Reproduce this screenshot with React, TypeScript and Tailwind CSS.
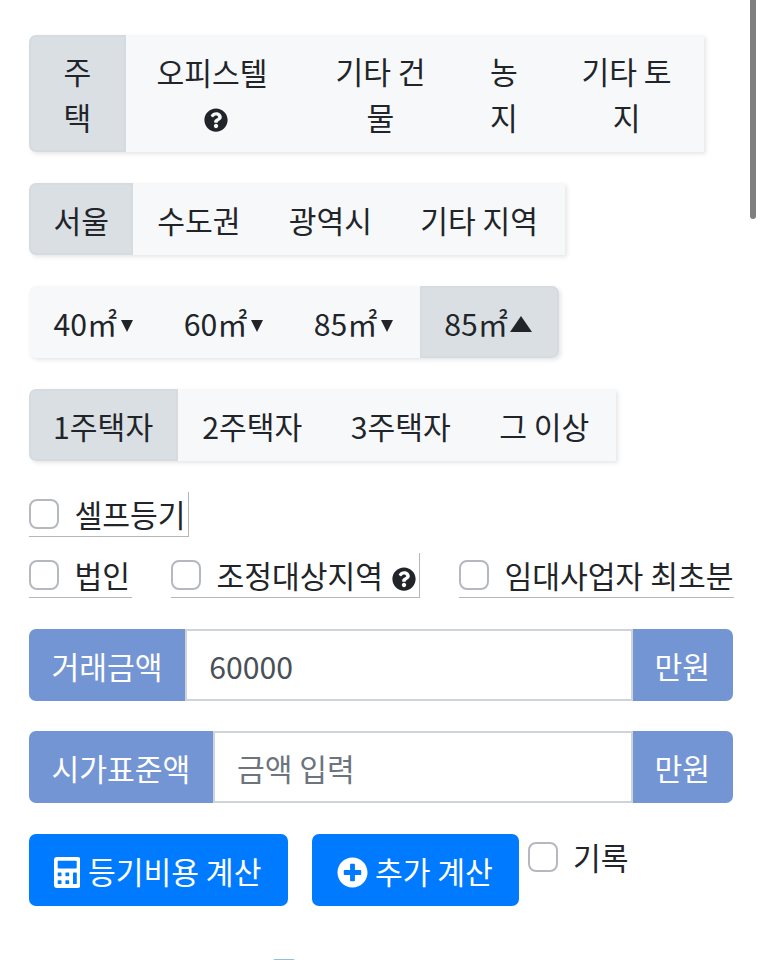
import type { ReactNode } from "react";
import { FaPlusCircle, FaQuestionCircle } from "react-icons/fa";

function Segment({ active, className = "", children }: { active?: boolean; className?: string; children: ReactNode }) {
  return (
    <button
      className={`flex shrink-0 items-center justify-center border-2 px-[22.1px] pt-[12.6px] pb-[10px] whitespace-nowrap ${
        active ? "border-[#d6dbe0] bg-[#dadfe3]" : "border-transparent"
      } ${className}`}
    >
      {children}
    </button>
  );
}

function Group({ className = "", children }: { className?: string; children: ReactNode }) {
  return (
    <div className={`flex w-fit rounded-l-[7px] bg-[#f7f8fa] shadow-[2px_2px_4px_rgba(0,0,0,0.1)] ${className}`}>
      {children}
    </div>
  );
}

function Down() {
  return (
    <svg viewBox="0 0 12 12" className="mt-[6px] ml-[4px] h-[12px] w-[12px]" fill="#212529">
      <path d="M0 0H12L6 12Z" />
    </svg>
  );
}

function Up() {
  return (
    <svg viewBox="0 0 22 17" className="mt-px ml-[2px] h-[16px] w-[22px]" fill="#212529" preserveAspectRatio="none">
      <path d="M11 0L22 17H0Z" />
    </svg>
  );
}

function Calculator() {
  return (
    <svg viewBox="0 0 26.5 31" className="mr-[8px] h-[31px] w-[26.5px]">
      <rect width="26.5" height="31" rx="3" fill="#fff" />
      <g fill="#007bff">
        <rect x="3.7" y="3.8" width="19" height="7.7" rx="0.8" />
        <rect x="3.7" y="15.4" width="3.8" height="3.8" rx="0.6" />
        <rect x="11.4" y="15.4" width="3.8" height="3.8" rx="0.6" />
        <rect x="3.7" y="23.2" width="3.8" height="3.8" rx="0.6" />
        <rect x="11.4" y="23.2" width="3.8" height="3.8" rx="0.6" />
        <rect x="19" y="15.4" width="3.8" height="11.6" rx="0.6" />
      </g>
    </svg>
  );
}

function Box({ className = "" }: { className?: string }) {
  return <span className={`block size-[30px] shrink-0 rounded-[8px] border-2 border-[#b5b9be] bg-white ${className}`} />;
}

function Check({ className = "", children }: { className?: string; children: ReactNode }) {
  return (
    <label className={`flex h-[45px] items-center border-b border-[#b4b7ba] whitespace-nowrap ${className}`}>
      <Box />
      <span className="ml-[15.5px] flex items-center pt-[2px]">{children}</span>
    </label>
  );
}

function MoneyField({ label, value, placeholder, className = "" }: { label: string; value?: string; placeholder?: string; className?: string }) {
  return (
    <div className={`flex h-[72px] overflow-hidden rounded-[7px] ${className}`}>
      <span className="flex shrink-0 items-center bg-[#7495d4] pt-[3px] pr-[22.3px] pl-[22.5px] text-white">{label}</span>
      <input
        className="min-w-0 flex-1 border-2 border-[#ced4da] bg-white px-[22.3px] pt-[3px] text-[#495057] outline-none placeholder:text-[#6c757d]"
        defaultValue={value}
        placeholder={placeholder}
      />
      <span className="flex w-[100px] shrink-0 items-center bg-[#7495d4] pt-[3px] pl-[21.5px] text-white">만원</span>
    </div>
  );
}

export default function App() {
  return (
    <div className="relative h-[960px] w-[762px] overflow-hidden bg-white pt-[35px] pl-[29px] font-['Noto_Sans_CJK_KR',sans-serif] text-[30.2px] leading-[45.5px] text-[#212529]">
      <Group className="h-[117px]">
        <Segment active className="w-[97px] rounded-l-[7px]">주<br />택</Segment>
        <Segment className="w-[179px] flex-col">
          <span className="pr-[7px]">오피스텔</span>
          <span className="flex h-[45.5px] items-center pt-[5px]"><FaQuestionCircle className="size-[24px]" /></span>
        </Segment>
        <Segment className="w-[151px]">기타 건<br />물</Segment>
        <Segment className="w-[96px]">농<br />지</Segment>
        <Segment className="w-[152px] pr-[25px]">기타 토<br />지</Segment>
      </Group>

      <Group className="mt-[31px] h-[72px]">
        <Segment active className="rounded-l-[7px] pr-[22px] pl-[22.5px]">서울</Segment>
        <Segment>수도권</Segment>
        <Segment>광역시</Segment>
        <Segment className="pr-[24.5px]">기타 지역</Segment>
      </Group>

      <Group className="mt-[31px] h-[72px] rounded-r-[7px]">
        <Segment className="w-[130.5px] pr-[24px]">40㎡<Down /></Segment>
        <Segment className="w-[130px] pr-[24px]">60㎡<Down /></Segment>
        <Segment className="w-[130px] pr-[24px]">85㎡<Down /></Segment>
        <Segment active className="w-[139px] rounded-r-[7px] pr-[24px]">85㎡<Up /></Segment>
      </Group>

      <Group className="mt-[31px] h-[72px]">
        <Segment active className="rounded-l-[7px] pr-[23.3px]">1주택자</Segment>
        <Segment className="pl-[21.7px]">2주택자</Segment>
        <Segment className="pl-[22.4px]">3주택자</Segment>
        <Segment className="pr-[24.6px] pl-[22.4px]">그 이상</Segment>
      </Group>

      <div className="mt-[31px] flex">
        <Check className="w-[160px] border-r">셀프등기</Check>
      </div>
      <div className="mt-[16px] flex">
        <Check className="w-[103px]">법인</Check>
        <Check className="ml-[39px] w-[249px] border-r">
          조정대상지역
          <FaQuestionCircle className="mt-[6px] ml-[9px] size-[24px]" />
        </Check>
        <Check className="ml-[39px] w-[275px]">임대사업자 최초분</Check>
      </div>

      <MoneyField className="mt-[31px] w-[704px]" label="거래금액" value="60000" />
      <MoneyField className="mt-[30px] w-[704px]" label="시가표준액" placeholder="금액 입력" />

      <div className="mt-[31px] flex">
        <button className="flex h-[72px] w-[259px] items-center rounded-[7px] bg-[#007bff] pt-[4px] pl-[24.5px] whitespace-nowrap text-white">
          <Calculator />
          등기비용 계산
        </button>
        <button className="ml-[24px] flex h-[72px] w-[207px] items-center rounded-[7px] bg-[#007bff] pt-[4px] pl-[25px] whitespace-nowrap text-white">
          <FaPlusCircle className="mr-[7px] size-[31px]" />
          추가 계산
        </button>
        <label className="ml-[9px] flex h-[46px] items-center">
          <Box />
          <span className="ml-[15px] pt-[2px]">기록</span>
        </label>
      </div>

      <div className="mt-[53px] ml-[244px] h-[20px] w-[22px] rounded-t-[2px] bg-[#8fc0e0]" />

      <div className="absolute -top-2 left-[750px] h-[227px] w-[6px] rounded-full bg-[#7f7f7f]" />
    </div>
  );
}
